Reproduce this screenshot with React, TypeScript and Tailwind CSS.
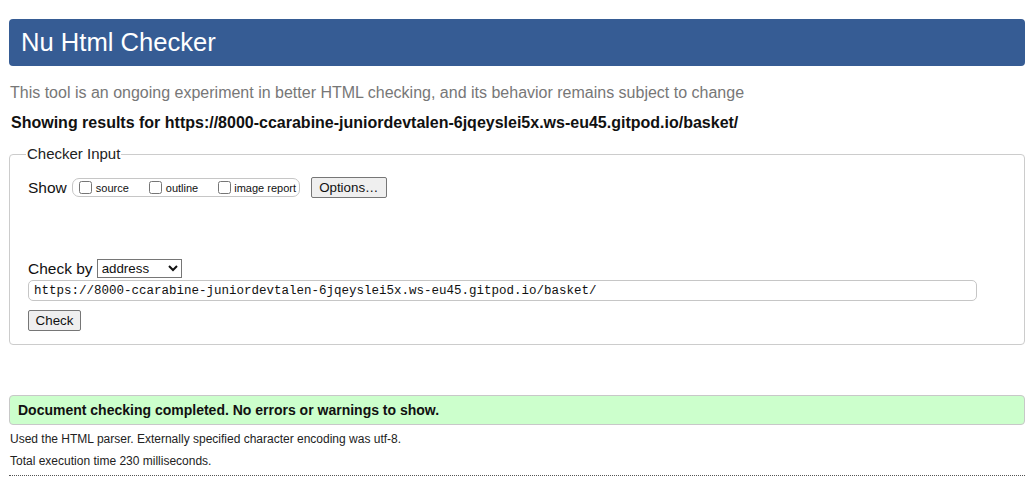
import { useState } from "react";

const url =
  "https://8000-ccarabine-juniordevtalen-6jqeyslei5x.ws-eu45.gitpod.io/basket/";

export default function App() {
  const [checkBy, setCheckBy] = useState("address");
  const [doc, setDoc] = useState(url);

  return (
    <div className="min-h-[492px] bg-white pl-[9px] pr-[10px] pt-[19px] font-['Liberation_Sans',Arial,sans-serif] text-[#111]">
      <header className="flex h-[47px] items-center rounded-[4px] bg-[#365c94] pl-3">
        <h1 className="text-[25.6px] leading-none text-white">Nu Html Checker</h1>
      </header>

      <p className="mt-[17px] pl-px text-[16px] leading-[20px] text-[#777]">
        This tool is an ongoing experiment in better HTML checking, and its
        behavior remains subject to change
      </p>
      <p className="mt-[10px] pl-[2px] text-[16px] font-bold leading-[20px]">
        Showing results for {url}
      </p>

      <fieldset className="mt-[12px] h-[200px] rounded-[4px] border border-[#ccc] pl-[18px] pr-[47px]">
        <legend className="ml-[-2px] px-px text-[15px] leading-[18px] text-[#222]">
          Checker Input
        </legend>

        <div className="mt-[14px] flex items-center">
          <span className="text-[15.5px] leading-[18px]">Show</span>
          <div className="ml-[5px] flex h-[19px] w-[228px] items-center rounded-[7px] border border-[#c6c6c6] pl-[6px] text-[11px]">
            <label className="flex items-center">
              <input type="checkbox" className="m-0 h-[13px] w-[13px]" />
              <span className="ml-[4px] mt-[2px]">source</span>
            </label>
            <label className="ml-[20px] flex items-center">
              <input type="checkbox" className="m-0 h-[13px] w-[13px]" />
              <span className="ml-[4px] mt-[2px]">outline</span>
            </label>
            <label className="ml-[20px] flex items-center">
              <input type="checkbox" className="m-0 h-[13px] w-[13px]" />
              <span className="ml-[3px] mt-[2px]">image report</span>
            </label>
          </div>
          <button className="ml-[11px] h-[21px] w-[76px] rounded-[2px] border border-[#767676] bg-[#efefef] text-[13.33px] leading-none">
            Options…
          </button>
        </div>

        <div className="mt-[61px] flex items-center">
          <span className="text-[15.5px] leading-[18px]">Check by</span>
          <select
            value={checkBy}
            onChange={(e) => setCheckBy(e.target.value)}
            className="ml-[4px] h-[19px] w-[85px] border border-[#767676] bg-white text-[13.33px] leading-none"
          >
            <option value="address">address</option>
            <option value="file">file upload</option>
            <option value="text">text input</option>
          </select>
        </div>

        <input
          value={doc}
          onChange={(e) => setDoc(e.target.value)}
          className="mt-[2px] block h-[21px] w-full rounded-[5px] border border-[#c6c6c6] px-[5px] font-['Liberation_Mono',monospace] text-[12.5px] leading-none text-[#111] outline-none"
        />

        <button className="mt-[9px] block h-[21px] w-[53px] rounded-[2px] border border-[#767676] bg-[#efefef] text-[13.33px] leading-none">
          Check
        </button>
      </fieldset>

      <div className="mt-[50px] flex h-[30px] items-center rounded-[4px] border border-[#c8c8c8] bg-[#ccffcc] pl-[8px]">
        <p className="text-[14px] font-bold">
          Document checking completed. No errors or warnings to show.
        </p>
      </div>

      <p className="mt-[6px] pl-px text-[12px] leading-[16px] text-[#222]">
        Used the HTML parser. Externally specified character encoding was utf-8.
      </p>
      <p className="mt-[6px] pl-px text-[12px] leading-[16px] text-[#222]">
        Total execution time 230 milliseconds.
      </p>
      <hr className="mt-[6px] border-0 border-t border-dotted border-[#555]" />
    </div>
  );
}
